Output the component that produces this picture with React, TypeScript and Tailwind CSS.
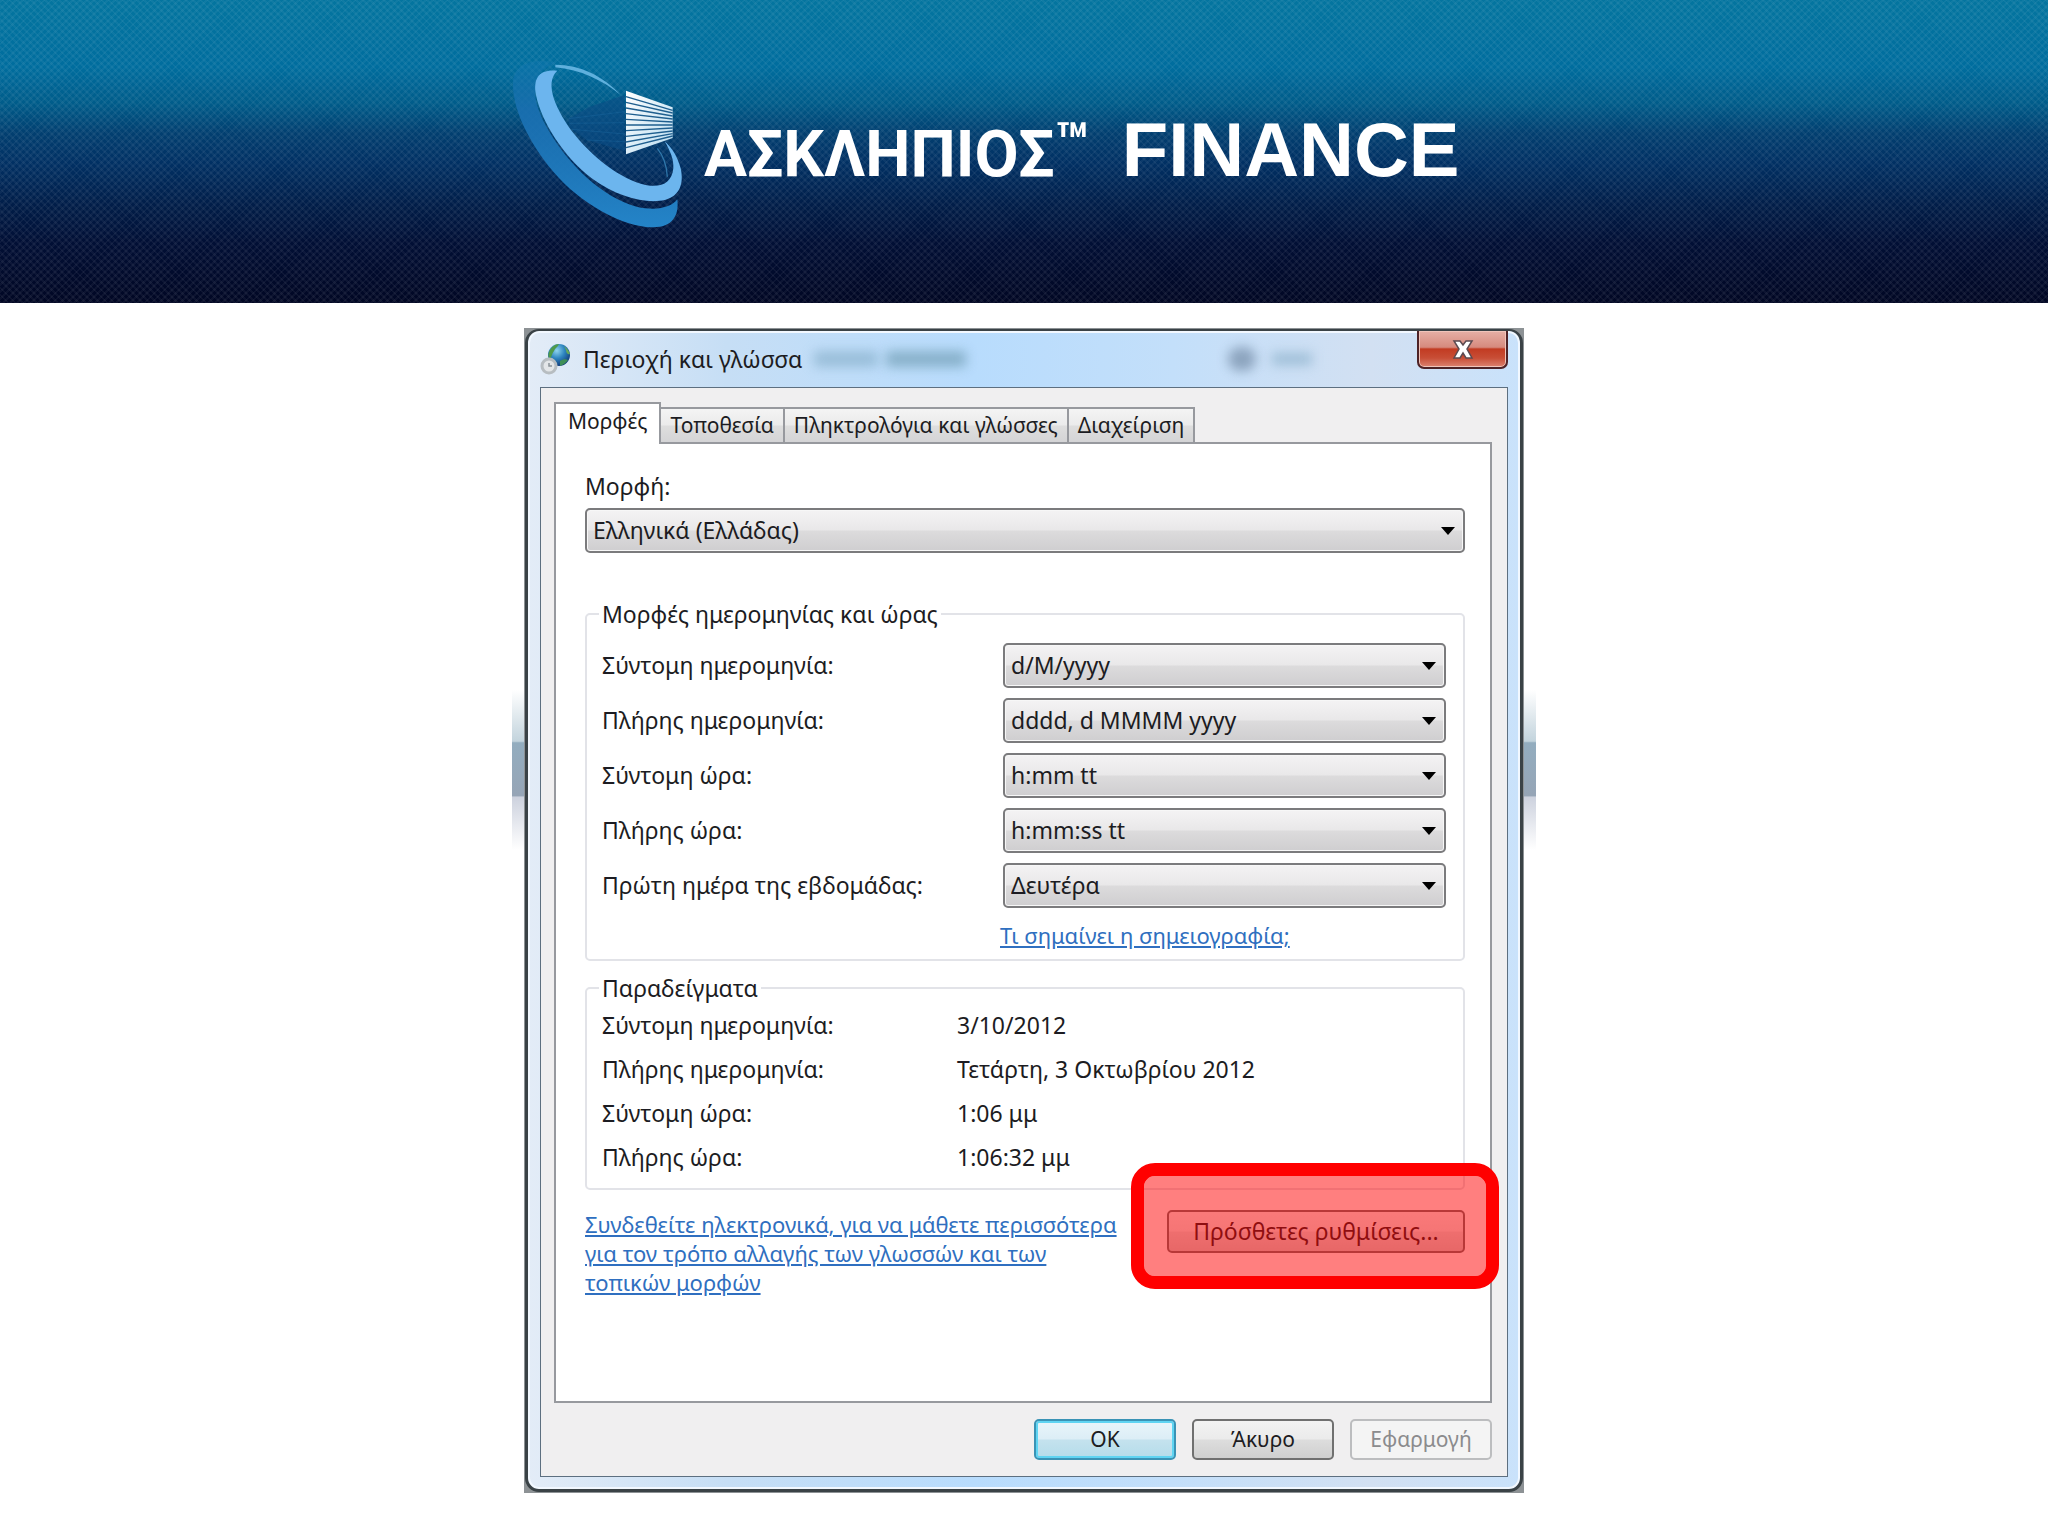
import clsx from "clsx";
import type { ReactNode } from "react";

const TABS = ["Μορφές", "Τοποθεσία", "Πληκτρολόγια και γλώσσες", "Διαχείριση"];

const FORMATS = [
  { id: "short-date", label: "Σύντομη ημερομηνία:", value: "d/M/yyyy" },
  { id: "long-date", label: "Πλήρης ημερομηνία:", value: "dddd, d MMMM yyyy" },
  { id: "short-time", label: "Σύντομη ώρα:", value: "h:mm tt" },
  { id: "long-time", label: "Πλήρης ώρα:", value: "h:mm:ss tt" },
  { id: "first-day", label: "Πρώτη ημέρα της εβδομάδας:", value: "Δευτέρα" },
];

const EXAMPLES = [
  { label: "Σύντομη ημερομηνία:", value: "3/10/2012" },
  { label: "Πλήρης ημερομηνία:", value: "Τετάρτη, 3 Οκτωβρίου 2012" },
  { label: "Σύντομη ώρα:", value: "1:06 μμ" },
  { label: "Πλήρης ώρα:", value: "1:06:32 μμ" },
];

function Logo() {
  return (
    <svg viewBox="66 48 540 528" className="w-[180px] h-[176px] shrink-0" aria-hidden="true">
      <defs>
        <linearGradient id="ring" x1="0" y1="0" x2="0" y2="1">
          <stop offset="0" stopColor="#1579b4" stopOpacity="0.3" />
          <stop offset="0.3" stopColor="#1a70b2" stopOpacity="0.9" />
          <stop offset="1" stopColor="#2484c8" />
        </linearGradient>
        <linearGradient id="tower" x1="0" y1="0" x2="1" y2="1">
          <stop offset="0" stopColor="#ffffff" />
          <stop offset="1" stopColor="#b9dcf0" />
        </linearGradient>
      </defs>
      <path
        d="M200 68C130 54 72 66 69 130C67 200 110 300 190 395C270 490 400 562 490 562C545 562 568 530 562 478C545 502 500 514 440 500C340 474 235 375 175 270C125 185 110 95 200 68Z"
        fill="url(#ring)"
      />
      <path d="M404 165L300 200L236 236L238 262L290 300L404 332Z" fill="#0a4c86" opacity="0.6" />
      <path d="M236 236L404 215M238 250L404 248M246 268L404 282M290 300L404 305" stroke="#1c6ba3" strokeWidth="2" opacity="0.6" />
      <path d="M196 74C270 74 340 108 392 165C340 122 270 88 196 82Z" fill="#5fb0dd" />
      <path
        d="M202 92C150 86 128 112 138 165C152 240 220 350 305 415C385 474 470 492 525 480C570 468 582 430 572 385C563 352 548 325 524 304C542 335 552 360 550 385C546 425 520 441 480 437C410 428 320 365 255 285C200 215 160 130 202 92Z"
        fill="#6cb5ee"
      />
      <path d="M502 325C522 350 530 375 532 410" stroke="#2f77ab" strokeWidth="4" fill="none" />
      <path d="M408 152L548 202V294L408 343Z" fill="url(#tower)" />
      <path
        d="M408 170L548 211M408 187L548 219M408 204L548 228M408 221L548 237M408 238L548 246M408 255L548 255M408 272L548 264M408 289L548 273M408 306L548 281M408 323L548 288"
        stroke="#1f5f8f"
        strokeWidth="4"
      />
    </svg>
  );
}

function GlobeIcon() {
  return (
    <svg viewBox="0 0 32 32" className="w-8 h-8 shrink-0" aria-hidden="true">
      <defs>
        <radialGradient id="globe" cx="0.4" cy="0.3" r="0.7">
          <stop offset="0" stopColor="#8fd4ee" />
          <stop offset="0.5" stopColor="#2f86c0" />
          <stop offset="1" stopColor="#123e7c" />
        </radialGradient>
      </defs>
      <circle cx="19" cy="12" r="11" fill="url(#globe)" />
      <path d="M9 9C11 4 15 1 19 1C18 4 15 5 14 8C12 10 12 13 10 16C8 14 8 12 9 9Z" fill="#4f9a4a" />
      <path d="M24 3C27 5 29 8 30 11C28 12 26 10 26 7Z" fill="#66a85a" />
      <path d="M20 18C23 16 26 16 28 17C26 20 23 22 20 23Z" fill="#3f8f56" />
      <circle cx="9" cy="23" r="7" fill="#e3e6e8" stroke="#b7bdc1" strokeWidth="3" />
      <path d="M9 20V23H12" stroke="#8b9398" strokeWidth="1.5" fill="none" />
    </svg>
  );
}

function Select({ id, value }: { id: string; value: string }) {
  return (
    <div className="relative">
      <select
        id={id}
        defaultValue={value}
        className="block w-full h-[45px] appearance-none rounded-[5px] border-2 border-[#7b7b7d] pl-[6px] pr-8 bg-[linear-gradient(#f4f3f4,#e9e8e9_48%,#dcdbdc_52%,#cfced0)] shadow-[inset_0_0_0_1px_#f7f7f7] text-[#1c1c22]"
      >
        <option>{value}</option>
      </select>
      <svg viewBox="0 0 14 8" className="absolute right-[10px] top-[19px] w-[14px] h-2 pointer-events-none" aria-hidden="true">
        <path d="M0 0H14L7 8Z" fill="#000" />
      </svg>
    </div>
  );
}

interface PushButtonProps {
  children: ReactNode;
  className?: string;
  disabled?: boolean;
}

function PushButton({ children, className = "", disabled }: PushButtonProps) {
  return (
    <button
      type="button"
      disabled={disabled}
      className={clsx("rounded-[5px] border-2 text-center", disabled ? "text-[#8b8b8d]" : "text-[#1c1c22]", className)}
    >
      {children}
    </button>
  );
}

function Group({ title, children }: { title: string; children: ReactNode }) {
  return (
    <fieldset className="rounded-[5px] border-2 border-[#e2e3e8]">
      <legend className="ml-[12px] px-[3px] leading-[30px]">{title}</legend>
      {children}
    </fieldset>
  );
}

function Banner() {
  return (
    <header className="h-[303px] bg-[repeating-linear-gradient(45deg,#ffffff0c_0_2px,transparent_2px_5px),repeating-linear-gradient(-45deg,#ffffff0c_0_2px,transparent_2px_5px),linear-gradient(#04759f,#006d9e_22%,#005c8a_34%,#023f70_44%,#013063_54%,#011d48_68%,#010f35_80%,#010724)]">
      <div className="mx-auto flex w-full max-w-[1024px] items-start pt-[56px]">
        <Logo />
        <h1 className="flex items-baseline pt-[50px] pl-3 text-[76px] leading-[88px] font-bold text-white whitespace-nowrap font-['Liberation_Sans',sans-serif]">
          <span className="text-[64px] font-['Roboto',sans-serif]">ΑΣΚΛΗΠΙΟΣ</span>
          <span className="self-start text-[56px] leading-[74px] font-['Roboto',sans-serif]">™</span>
          <span className="pl-8">FINANCE</span>
        </h1>
      </div>
    </header>
  );
}

function TitleBar() {
  return (
    <div className="flex h-14 items-start">
      <div className="flex h-full grow items-center">
        <GlobeIcon />
        <h2 className="pl-[11px]">Περιοχή και γλώσσα</h2>
        <div className="ml-3 h-4 w-[64px] bg-[#7fa9c4] opacity-60 blur-[6px]" />
        <div className="ml-2 h-4 w-[80px] bg-[#7aa5bd] opacity-80 blur-[6px]" />
        <div className="ml-auto h-6 w-7 rounded-full bg-[#7d95b0] opacity-80 blur-[6px]" />
        <div className="ml-4 mr-[105px] h-3 w-10 bg-[#9dbdd6] blur-[6px]" />
      </div>
      <button
        type="button"
        aria-label="Κλείσιμο"
        className="flex h-[38px] w-[91px] items-center justify-center rounded-b-[7px] border-2 border-t-0 border-[#4d2226] bg-[linear-gradient(#e6b0a6,#d68a7e_45%,#c23b22_50%,#c84e36_75%,#dc8371)] shadow-[inset_0_0_0_1px_#f0c4ba]"
      >
        <svg viewBox="0 0 22 19" className="h-[19px] w-[22px]" aria-hidden="true">
          <path
            d="M2 1H8L11 5L14 1H20L15 9L20 18H14L11 13L8 18H2L7 9Z"
            fill="#fff"
            stroke="#5c4a50"
            strokeWidth="1.5"
          />
        </svg>
      </button>
    </div>
  );
}

function FormatsPanel() {
  return (
    <div className="min-h-[961px] border-2 border-[#97999e] bg-white pt-[27px] pr-[25px] pl-[29px]">
      <label htmlFor="format" className="mb-[7px] block leading-[30px]">
        Μορφή:
      </label>
      <Select id="format" value="Ελληνικά (Ελλάδας)" />

      <div className="mt-[46px] flex flex-col gap-3">
        <Group title="Μορφές ημερομηνίας και ώρας">
          <div className="pt-[14px] pr-[17px] pb-[9px] pl-[15px]">
            <div className="grid gap-[10px]">
              {FORMATS.map(({ id, label, value }) => (
                <div key={id} className="grid grid-cols-[1fr_443px] items-center">
                  <label htmlFor={id}>{label}</label>
                  <Select id={id} value={value} />
                </div>
              ))}
            </div>
            <div className="mt-3 ml-auto w-[446px] leading-[30px]">
              <a href="#notation" className="text-[22px] text-[#2f6fc0] underline">
                Τι σημαίνει η σημειογραφία;
              </a>
            </div>
          </div>
        </Group>

        <Group title="Παραδείγματα">
          <dl className="px-[15px] pb-[9px] leading-[44px]">
            {EXAMPLES.map(({ label, value }) => (
              <div key={label} className="grid grid-cols-[355px_1fr]">
                <dt>{label}</dt>
                <dd>{value}</dd>
              </div>
            ))}
          </dl>
        </Group>
      </div>

      <div className="mt-5 flex items-start justify-between">
        <p className="w-[550px] text-[22px] leading-[29px]">
          <a href="#online" className="text-[#2f6fc0] underline">
            Συνδεθείτε ηλεκτρονικά, για να μάθετε περισσότερα για τον τρόπο αλλαγής των γλωσσών και των τοπικών μορφών
          </a>
        </p>
        <div className="relative">
          <PushButton className="h-[43px] w-[298px] border-[#707070] bg-[linear-gradient(#f3f3f3,#ebebeb_48%,#dddddd_52%,#cfcfcf)]">
            Πρόσθετες ρυθμίσεις...
          </PushButton>
          {/* highlight around the button */}
          <div className="pointer-events-none absolute -top-[47px] -right-[34px] -bottom-[36px] -left-[36px] rounded-3xl border-[13px] border-[#ff0000] bg-[#ff0000]/50 bg-clip-padding" />
        </div>
      </div>
    </div>
  );
}

function RegionDialog() {
  return (
    <div className="relative w-full max-w-[1000px] bg-[#8d9295] p-px">
      {/* dark smudges left by the desktop behind the window */}
      <div className="absolute top-[362px] -left-3 h-40 w-3 bg-[linear-gradient(transparent,#c3d4dd_32%,#93adbf_33%,#96a5b6_66%,#cdd2de_67%,transparent)]" />
      <div className="absolute top-[362px] -right-3 h-40 w-3 bg-[linear-gradient(transparent,#c3d4dd_32%,#93adbf_33%,#96a5b6_66%,#cdd2de_67%,transparent)]" />
      <div className="rounded-[14px] border-3 border-t-2 border-[#3a4246] bg-[linear-gradient(90deg,#e3ecf7,#c6def5_20%,#b8dcfd_45%,#c3dffa_65%,#d2e0f2_85%,#c9e2fb)] px-[12px] pb-[12px] shadow-[inset_0_0_0_2px_#f2f8ff]">
        <TitleBar />
        <div className="border border-[#5d6f80] bg-[#f0eff0] pt-[14px] pr-[15px] pb-4 pl-[13px]">
          <div role="tablist" className="flex items-end text-[21px]">
            {TABS.map((tab, i) => (
              <button
                key={tab}
                type="button"
                role="tab"
                aria-selected={i === 0}
                className={clsx(
                  "border-2 border-b-0 border-[#97999e]",
                  i === 0
                    ? "relative -mb-[2px] h-[42px] bg-white px-[12px] pb-1"
                    : "h-[35px] border-l-0 bg-[linear-gradient(#f4f4f4,#ebebeb_48%,#dedede_52%,#d4d4d6)] px-[9px]"
                )}
              >
                {tab}
              </button>
            ))}
          </div>
          <FormatsPanel />
          <div className="mt-4 flex justify-end gap-4 text-[21px]">
            <PushButton className="h-[41px] w-[142px] border-[#3a93b5] bg-[linear-gradient(#e9f5fa,#dceef6_48%,#c4e2ee_52%,#b4dcea)] shadow-[inset_0_0_0_2px_#5fd4f2]">
              OK
            </PushButton>
            <PushButton className="h-[41px] w-[142px] border-[#707070] bg-[linear-gradient(#f3f3f3,#ebebeb_48%,#dddddd_52%,#cfcfcf)]">
              Άκυρο
            </PushButton>
            <PushButton className="h-[41px] w-[142px] border-[#bcbdbf] bg-[#f4f4f4]" disabled>
              Εφαρμογή
            </PushButton>
          </div>
        </div>
      </div>
    </div>
  );
}

export default function App() {
  return (
    <div className="min-h-screen bg-white text-[23px] text-[#1c1c22] font-['Noto_Sans',sans-serif]">
      <Banner />
      <main className="flex justify-center pt-[25px]">
        <RegionDialog />
      </main>
    </div>
  );
}
